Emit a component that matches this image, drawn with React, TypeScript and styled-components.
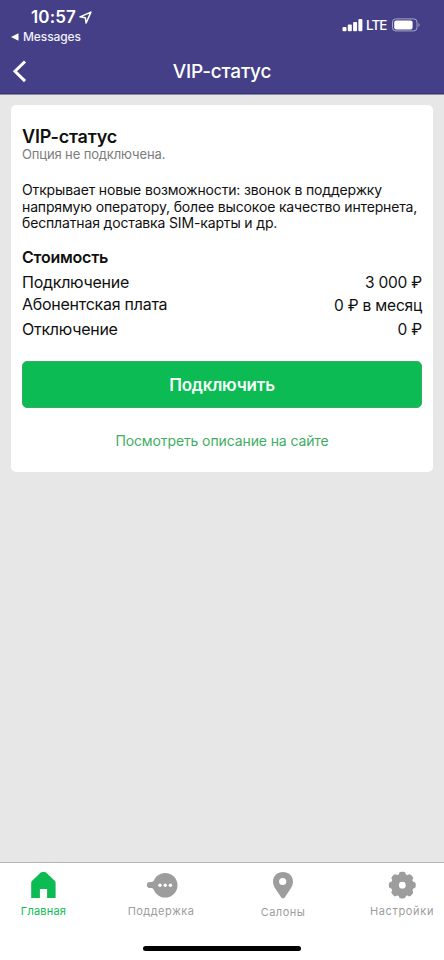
import React from "react";
import styled, { createGlobalStyle } from "styled-components";

const purple = "#443f86";
const green = "#0cbb54";
const grey = "#9d9d9d";

const GlobalStyle = createGlobalStyle`
  * { box-sizing: border-box; }
  body { margin: 0; background: #e7e7e7; font-family: Inter, "Liberation Sans", sans-serif; color: #101010; }
`;

const Screen = styled.div`
  width: 444px;
  height: 960px;
  display: flex;
  flex-direction: column;
  overflow: hidden;
`;

const Header = styled.header`
  height: 95px;
  background: ${purple};
  border-bottom: 1px solid #8c89ab;
  box-shadow: inset 0 -1px #38346f;
  color: #fff;
`;

const StatusBar = styled.div`
  height: 47px;
  display: flex;
  justify-content: space-between;
  padding: 7px 24px 0 11px;
`;

const Time = styled.div`
  display: flex;
  align-items: center;
  gap: 3px;
  padding-left: 20px;
  font-size: 17px;
  font-weight: 600;
  line-height: 20px;
  letter-spacing: 0.12px;
`;

const BackToApp = styled.div`
  display: flex;
  align-items: center;
  gap: 4px;
  margin-top: 3px;
  font-size: 12px;
  font-weight: 500;
  line-height: 14px;
  letter-spacing: -0.1px;
  color: #f0effa;
`;

const Signals = styled.div`
  height: 18px;
  margin-top: 9px;
  display: flex;
  align-items: center;
`;

const Network = styled.span`
  width: 28px;
  padding-left: 3px;
  font-size: 13.5px;
  font-weight: 500;
  letter-spacing: -0.9px;
`;

const NavBar = styled.nav`
  height: 47px;
  display: grid;
  grid-template-columns: 44px 1fr 44px;
  align-items: center;
`;

const BackButton = styled.button`
  height: 30px;
  padding: 0 0 0 12px;
  border: 0;
  background: none;
  color: #fff;
  text-align: left;
  svg { display: block; }
`;

const NavTitle = styled.h1`
  margin: 0;
  padding-top: 2px;
  font-size: 19px;
  font-weight: 500;
  line-height: 26px;
  letter-spacing: -0.23px;
  text-align: center;
`;

const Content = styled.main`
  flex: 1;
  padding: 10px 11px;
`;

const Card = styled.section`
  height: 367px;
  padding: 22px 11px 0;
  border-radius: 5px;
  background: #fff;
`;

const Heading = styled.h2`
  margin: 0;
  font-size: 18px;
  font-weight: 600;
  line-height: 19px;
  letter-spacing: -0.2px;
`;

const Status = styled.p`
  margin: 0;
  font-size: 13px;
  line-height: 16px;
  letter-spacing: -0.13px;
  color: #7c7c7c;
`;

const Description = styled.p`
  margin: 20px 0 0;
  font-size: 14px;
  line-height: 16.7px;
  letter-spacing: -0.15px;
  white-space: nowrap;
`;

const PriceTitle = styled.h3`
  margin: 15px 0 3px;
  font-size: 16px;
  font-weight: 600;
  line-height: 20px;
  letter-spacing: -0.22px;
`;

const PriceRow = styled.div<{ $height: number; $lift?: number }>`
  height: ${(p) => p.$height}px;
  display: flex;
  align-items: center;
  justify-content: space-between;
  font-size: 16px;
  line-height: 20px;
  letter-spacing: -0.26px;
  span:first-child { padding-bottom: ${(p) => p.$lift ?? 0}px; }
`;

const Price = styled.span`
  padding-top: 2px;
  font-size: 15.5px;
  letter-spacing: -0.2px;
`;

const ConnectButton = styled.button`
  display: block;
  width: 100%;
  height: 47px;
  margin-top: 19px;
  padding: 0;
  border: 1px solid #35ad63;
  border-radius: 5px;
  background: ${green};
  color: #f4fff8;
  font: 600 17px/22px Inter, sans-serif;
  letter-spacing: -0.2px;
`;

const SiteLink = styled.a`
  display: block;
  margin-top: 22px;
  font-size: 14px;
  line-height: 21px;
  letter-spacing: -0.11px;
  text-align: center;
  color: #3fae62;
`;

const BottomBar = styled.footer`
  height: 98px;
  display: flex;
  flex-direction: column;
  border-top: 1px solid #b4b4b4;
  background: #fff;
`;

const Tabs = styled.div`
  height: 83px;
  display: flex;
`;

const Tab = styled.div<{ $width: number; $active?: boolean; $drop?: number }>`
  width: ${(p) => p.$width}px;
  padding-top: 8px;
  display: flex;
  flex-direction: column;
  align-items: center;
  gap: ${(p) => 4 + (p.$drop ?? 0)}px;
  color: ${(p) => (p.$active ? green : grey)};
  &:last-child { margin-left: auto; }
  svg { display: block; }
`;

const TabLabel = styled.span<{ $spacing: number }>`
  font-size: 11px;
  line-height: 16px;
  letter-spacing: ${(p) => p.$spacing}px;
`;

const HomeIndicator = styled.div`
  width: 158px;
  height: 5px;
  margin-left: 143px;
  border-radius: 3px;
  background: #000;
`;

const HomeIcon = () => (
  <svg width="28" height="28" viewBox="0 0 28 28" fill="currentColor">
    <path d="M10.700 1.600Q11.300 1 12.300 1h2.200q.9 0 1.600.6l8.600 8.200q.9.9.9 2V27H17.100v-9H9.900v9H1.200V11.800q0-1.200.9-2z" />
  </svg>
);

const SupportIcon = () => (
  <svg width="34" height="28" viewBox="0 0 34 28">
    <g fill="currentColor">
      <circle cx="21.200" cy="14.300" r="12.300" />
      <path d="M15 6 9.500 10.300Q8.500 11 7 11H5.500Q2.800 11.300 2.800 14t2.700 3H7q1.500.1 2.500.9L15 22.500z" />
    </g>
    <g fill="#fff">
      <circle cx="16" cy="14.200" r="1.700" />
      <circle cx="21.200" cy="14.200" r="1.700" />
      <circle cx="26.400" cy="14.200" r="1.700" />
    </g>
  </svg>
);

const PinIcon = () => (
  <svg width="28" height="28" viewBox="0 0 28 28">
    <path fill="currentColor" d="M14 .9c5.700 0 10 4 10 9.600 0 3.300-1.500 6.100-3.600 9.100l-4.700 6.800q-.6.900-1.700.9t-1.700-.9l-4.700-6.800C5.500 16.600 4 13.800 4 10.500 4 4.900 8.300.9 14 .9z" />
    <circle cx="13.700" cy="10.500" r="3.600" fill="#fff" />
  </svg>
);

const GearIcon = () => (
  <svg width="28" height="28" viewBox="0 0 28 28">
    <g fill="currentColor">
      <circle cx="14.300" cy="14.200" r="11.300" />
      {[0, 45, 90, 135].map((angle) => (
        <rect key={angle} x="10.900" y="0.800" width="6.800" height="26.800" rx="2.400" transform={`rotate(${angle} 14.3 14.2)`} />
      ))}
    </g>
    <circle cx="14.300" cy="14.200" r="3.400" fill="#fff" />
  </svg>
);

export default function App() {
  return (
    <Screen>
      <GlobalStyle />
      <Header>
        <StatusBar>
          <div>
            <Time>
              10:57
              <svg width="13" height="13" viewBox="0 0 12 12" fill="none" stroke="#fff" strokeWidth="1.400" strokeLinejoin="round">
                <path d="M11 1 .9 5.400l4.900.8.800 4.900z" />
              </svg>
            </Time>
            <BackToApp>
              <svg width="8" height="8" viewBox="0 0 8 8" fill="#fff">
                <path d="M0 4 7.500.2v7.600z" />
              </svg>
              Messages
            </BackToApp>
          </div>
          <Signals>
            <svg width="21" height="14" viewBox="0 0 21 14" fill="#fff">
              <rect x="0.500" y="9" width="4" height="4.300" rx="1" />
              <rect x="5.800" y="6.500" width="4" height="6.800" rx="1" />
              <rect x="11.100" y="4" width="4" height="9.300" rx="1" />
              <rect x="16.400" y="1" width="4" height="12.300" rx="1" />
            </svg>
            <Network>LTE</Network>
            <svg width="29" height="14" viewBox="0 0 29 14">
              <rect x="1.500" y="0.900" width="24.500" height="12" rx="3.200" fill="none" stroke="#aaa7cc" />
              <rect x="3.200" y="2.400" width="18.400" height="9" rx="2" fill="#fff" />
              <path d="M27.500 5v4c1.400-.5 1.400-3.500 0-4z" fill="#aaa7cc" />
            </svg>
          </Signals>
        </StatusBar>
        <NavBar>
          <BackButton aria-label="Назад">
            <svg width="16" height="24" viewBox="0 0 16 24" fill="none" stroke="currentColor" strokeWidth="3">
              <path d="M13 2.500 3 12.300l10 9.800" />
            </svg>
          </BackButton>
          <NavTitle>VIP-статус</NavTitle>
        </NavBar>
      </Header>
      <Content>
        <Card>
          <Heading>VIP-статус</Heading>
          <Status>Опция не подключена.</Status>
          <Description>
            Открывает новые возможности: звонок в поддержку
            <br />
            напрямую оператору, более высокое качество интернета,
            <br />
            бесплатная доставка SIM-карты и др.
          </Description>
          <PriceTitle>Стоимость</PriceTitle>
          <PriceRow $height={24}>
            <span>Подключение</span>
            <Price>3 000 ₽</Price>
          </PriceRow>
          <PriceRow $height={22} $lift={2}>
            <span>Абонентская плата</span>
            <Price>0 ₽ в месяц</Price>
          </PriceRow>
          <PriceRow $height={26}>
            <span>Отключение</span>
            <Price>0 ₽</Price>
          </PriceRow>
          <ConnectButton>Подключить</ConnectButton>
          <SiteLink>Посмотреть описание на сайте</SiteLink>
        </Card>
      </Content>
      <BottomBar>
        <Tabs>
          <Tab $width={87} $active>
            <HomeIcon />
            <TabLabel $spacing={0.2}>Главная</TabLabel>
          </Tab>
          <Tab $width={148}>
            <SupportIcon />
            <TabLabel $spacing={0.45}>Поддержка</TabLabel>
          </Tab>
          <Tab $width={96} $drop={1}>
            <PinIcon />
            <TabLabel $spacing={0.47}>Салоны</TabLabel>
          </Tab>
          <Tab $width={84}>
            <GearIcon />
            <TabLabel $spacing={0.65}>Настройки</TabLabel>
          </Tab>
        </Tabs>
        <HomeIndicator />
      </BottomBar>
    </Screen>
  );
}
